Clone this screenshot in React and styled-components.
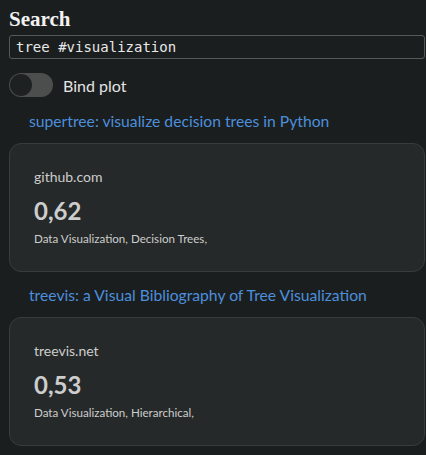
import React, { useState } from "react";
import styled, { createGlobalStyle } from "styled-components";

const Global = createGlobalStyle`
  html, body { margin: 0; padding: 0; background: #1b1e1e; }
  body { font-family: Lato, "Noto Sans", sans-serif; color: #e6e6e6; }
`;

const Page = styled.div`
  padding: 7px 1px 16px 9px;
  display: flex;
  flex-direction: column;
`;

const Title = styled.h1`
  margin: 0;
  font-family: "Liberation Serif", serif;
  font-weight: 700;
  font-size: 21px;
  line-height: 24px;
  color: #f2f2f2;
`;

const SearchInput = styled.input`
  margin-top: 4px;
  box-sizing: border-box;
  height: 24px;
  width: 100%;
  background: #1b1e1e;
  border: 1px solid #555a58;
  border-radius: 3px;
  padding: 0 6px;
  font-family: "DejaVu Sans Mono", monospace;
  font-size: 14px;
  color: #e8e8e8;
  outline: none;
`;

const ToggleRow = styled.label`
  margin-top: 14px;
  display: flex;
  align-items: center;
  gap: 10px;
  height: 24px;
  font-size: 16px;
  color: #e4e4e4;
`;

const Track = styled.span`
  position: relative;
  width: 44px;
  height: 24px;
  border-radius: 12px;
  background: ${(p) => (p.$on ? "#4b8fdd" : "#4b4e4d")};
  flex: none;
`;

const Knob = styled.span`
  position: absolute;
  top: 1px;
  left: ${(p) => (p.$on ? "21px" : "1px")};
  width: 22px;
  height: 22px;
  border-radius: 50%;
  background: #1e2121;
`;

const ResultLink = styled.a`
  margin: ${(p) => (p.$first ? "14px" : "13px")} 0 12px 20px;
  font-size: 15.7px;
  line-height: 20px;
  color: #4b8fdd;
  text-decoration: none;
`;

const Card = styled.div`
  background: #262929;
  border: 1px solid #393c3c;
  border-radius: 12px;
  padding: 24px 24px 25px 24px;
  display: flex;
  flex-direction: column;
  color: #cdcdcd;
`;

const Domain = styled.div`
  font-size: 14px;
  line-height: 18px;
`;

const Score = styled.div`
  margin-top: 11px;
  font-size: 24px;
  font-weight: 700;
  line-height: 28px;
`;

const Tags = styled.div`
  margin-top: 6px;
  font-size: 11.6px;
  line-height: 15px;
`;

const results = [
  {
    title: "supertree: visualize decision trees in Python",
    domain: "github.com",
    score: "0,62",
    tags: "Data Visualization, Decision Trees,",
  },
  {
    title: "treevis: a Visual Bibliography of Tree Visualization",
    domain: "treevis.net",
    score: "0,53",
    tags: "Data Visualization, Hierarchical,",
  },
];

export default function App() {
  const [on, setOn] = useState(false);
  return (
    <>
      <Global />
      <Page>
        <Title>Search</Title>
        <SearchInput defaultValue="tree #visualization" />
        <ToggleRow onClick={() => setOn(!on)}>
          <Track $on={on}>
            <Knob $on={on} />
          </Track>
          Bind plot
        </ToggleRow>
        {results.map((r, i) => (
          <React.Fragment key={r.domain}>
            <ResultLink href="#" $first={i === 0}>
              {r.title}
            </ResultLink>
            <Card>
              <Domain>{r.domain}</Domain>
              <Score>{r.score}</Score>
              <Tags>{r.tags}</Tags>
            </Card>
          </React.Fragment>
        ))}
      </Page>
    </>
  );
}
